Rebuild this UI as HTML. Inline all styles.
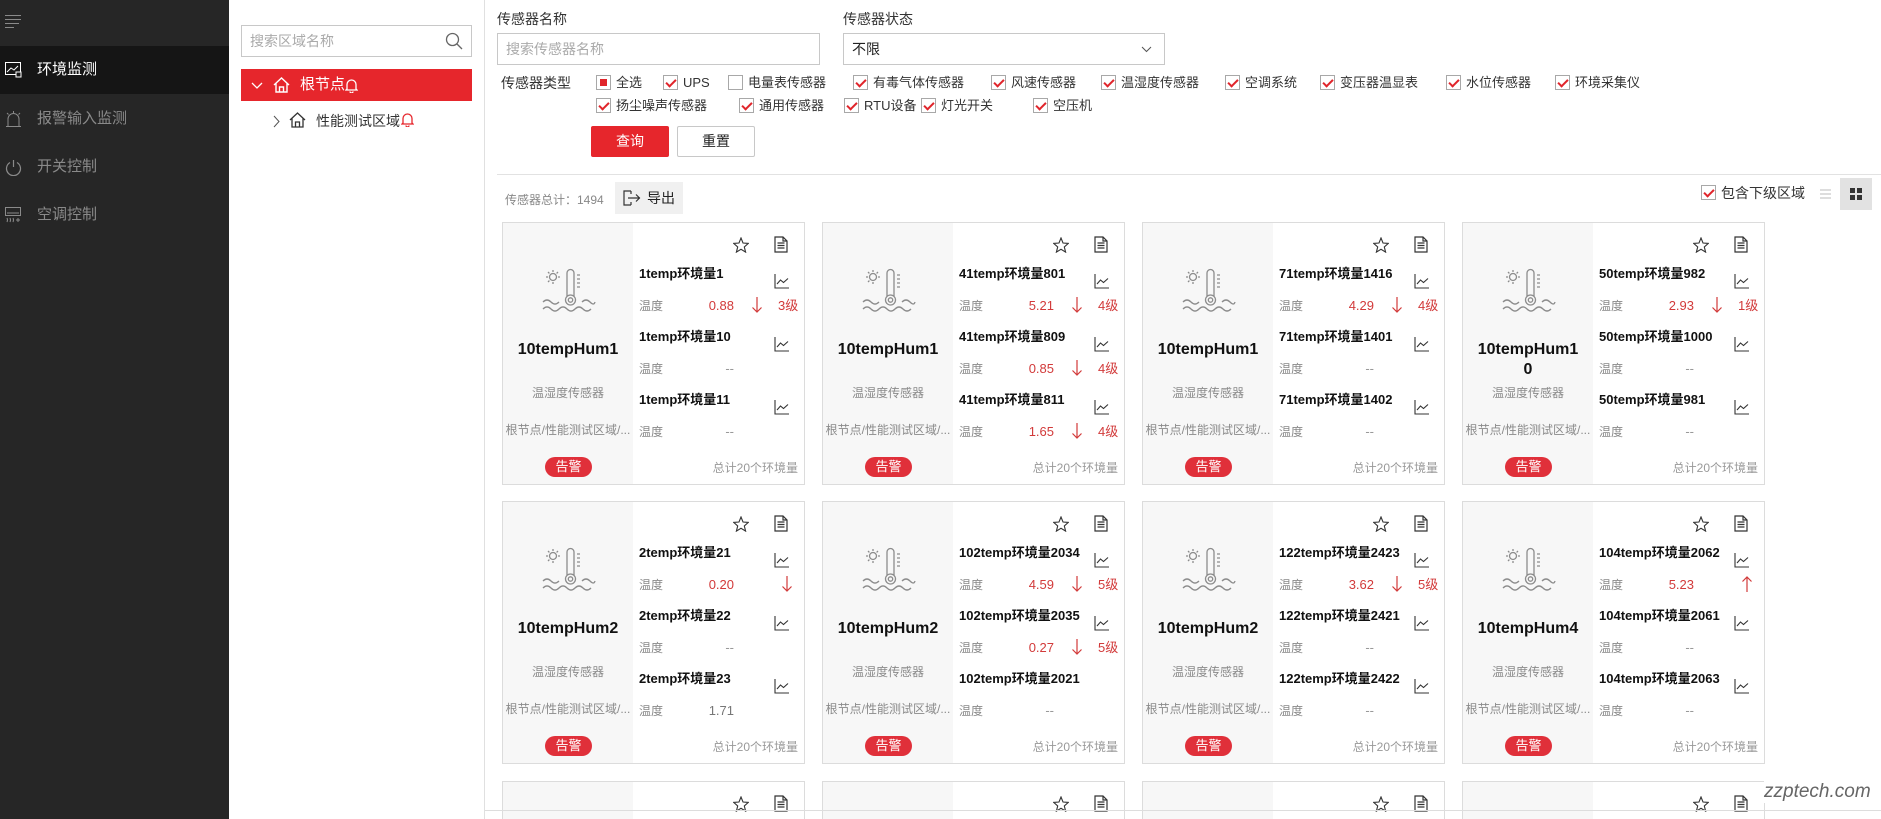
<!DOCTYPE html>
<html style="width:1881px;height:819px;overflow:hidden"><head><meta charset="utf-8">
<style>
*{margin:0;padding:0;box-sizing:border-box}
body{width:1881px;height:819px;overflow:hidden;background:#fff;font-family:"Liberation Sans","Noto Sans CJK SC",sans-serif;position:relative;color:#222}
.a{position:absolute;white-space:nowrap}
#side{position:absolute;left:0;top:0;width:229px;height:819px;background:#262626}
.si{position:absolute;left:0;width:229px;height:48px;color:#8a8a8a;font-size:15px;line-height:48px;padding-left:37px}
.si svg{position:absolute;left:5px;top:16px}
#tree{position:absolute;left:229px;top:0;width:256px;height:819px;border-right:1px solid #e0e0e0}
.cb{position:absolute;font-size:13px;color:#333;line-height:16px;padding-left:20px;white-space:nowrap}
.cb i{position:absolute;left:0;top:0;width:15px;height:15px;border:1px solid #a8a8a8;background:#fff}
.cb i.k::after{content:"";position:absolute;left:4px;top:1px;width:4px;height:8px;border:solid #e0252b;border-width:0 2px 2px 0;transform:rotate(45deg)}
.card{position:absolute;width:303px;height:263px;border:1px solid #dcdcdc;background:#fff;overflow:hidden}
.lp{position:absolute;left:0;top:0;width:130px;height:100%;background:#f7f7f7;text-align:center}
.nm{position:absolute;left:0;width:130px;font-size:16px;font-weight:bold;color:#111;top:117px;line-height:19px}
.tp{position:absolute;left:0;width:130px;top:161px;font-size:12px;color:#8a8a8a}
.pt{position:absolute;left:-2px;width:134px;top:198px;font-size:12px;color:#8a8a8a;white-space:nowrap;overflow:hidden}
.bd{position:absolute;left:42px;top:234px;width:47px;height:20px;border-radius:10px;background:#e0303a;color:#fff;font-size:13px;line-height:20px}
.ic{position:absolute;left:39px;top:44px}
.ti{position:absolute;left:136px;font-size:13px;font-weight:bold;color:#111}
.lb{position:absolute;left:136px;font-size:12px;color:#888;line-height:16px}
.v{position:absolute;right:70px;font-size:13px;color:#d23a3a;text-align:right;line-height:16px}
.v.g{color:#999}
.ar{position:absolute;left:249px}
.lv{position:absolute;left:275px;font-size:13px;color:#d23a3a;line-height:16px}
.ft{position:absolute;right:6px;top:236px;font-size:12px;color:#999}
.st{position:absolute;left:230px;top:14px}
.dc{position:absolute;left:271px;top:13px}
.ch{position:absolute;left:271px}
</style></head><body>

<div id="side">
 <svg class="a" style="left:5px;top:14px" width="17" height="14"><g stroke="#8a8a8a" stroke-width="1"><line x1="0" y1="1.5" x2="16" y2="1.5"/><line x1="0" y1="5.5" x2="16" y2="5.5"/><line x1="0" y1="9.5" x2="14" y2="9.5"/><line x1="0" y1="13.5" x2="9" y2="13.5"/></g></svg>
 <div class="si" style="top:46px;background:#151515;color:#fff"><svg width="17" height="16"><rect x="0.5" y="0.5" width="15" height="12" fill="none" stroke="#fff"/><polyline points="2,10 6,6 9,8 13,4" fill="none" stroke="#fff"/><rect x="11" y="10" width="5" height="5" fill="#151515" stroke="#fff"/></svg>环境监测</div>
 <div class="si" style="top:95px"><svg width="17" height="17"><path d="M3 15V8a5.5 5.5 0 0 1 11 0v7M1 15.5h15M8.5 0v2M2 2l1.5 1.5M15 2l-1.5 1.5" fill="none" stroke="#8a8a8a"/></svg>报警输入监测</div>
 <div class="si" style="top:143px"><svg width="17" height="17"><path d="M5 3.5a7 7 0 1 0 7 0M8.5 1v7" fill="none" stroke="#8a8a8a" stroke-width="1.2"/></svg>开关控制</div>
 <div class="si" style="top:191px"><svg width="17" height="17"><rect x="0.5" y="0.5" width="15" height="8" fill="none" stroke="#8a8a8a"/><line x1="2" y1="6" x2="14" y2="6" stroke="#8a8a8a"/><path d="M2 11q1 2 0 4M5 11q1 2 0 4M8 11q1 2 0 4M13 11v4M11 13h4" fill="none" stroke="#8a8a8a"/></svg>空调控制</div>
</div>

<div id="tree">
 <div class="a" style="left:12px;top:25px;width:231px;height:32px;border:1px solid #c8c8c8;font-size:14px;color:#aaa;line-height:30px;padding-left:8px">搜索区域名称
  <svg class="a" style="right:8px;top:6px" width="18" height="18"><circle cx="7.5" cy="7.5" r="6" fill="none" stroke="#666" stroke-width="1.3"/><line x1="12" y1="12" x2="17" y2="17" stroke="#666" stroke-width="1.3"/></svg></div>
 <div class="a" style="left:12px;top:69px;width:231px;height:32px;background:#e6262c;color:#fff;font-size:15px;line-height:32px">
  <svg class="a" style="left:10px;top:13px" width="12" height="8"><polyline points="1,1 6,6 11,1" fill="none" stroke="#fff" stroke-width="1.3"/></svg>
  <svg class="a" style="left:32px;top:8px" width="17" height="16"><path d="M1 8L8.5 1 16 8M3 6.5V15h11V6.5M6.5 15V10h4v5" fill="none" stroke="#fff" stroke-width="1.4"/></svg>
  <span class="a" style="left:59px">根节点</span>
  <svg class="a" style="left:104px;top:9px" width="13" height="15"><path d="M2 11V6.5a4.5 4.5 0 0 1 9 0V11l1 1H1zM5 13.5a1.5 1.5 0 0 0 3 0" fill="none" stroke="#fff" stroke-width="1.3"/></svg>
 </div>
 <svg class="a" style="left:44px;top:115px" width="8" height="13"><polyline points="1,1 6,6.5 1,12" fill="none" stroke="#555"/></svg>
 <svg class="a" style="left:60px;top:112px" width="17" height="16"><path d="M1 8L8.5 1 16 8M3 6.5V15h11V6.5M6.5 15V10h4v5" fill="none" stroke="#333" stroke-width="1.3"/></svg>
 <span class="a" style="left:87px;top:111px;font-size:14px;color:#333">性能测试区域</span>
 <svg class="a" style="left:172px;top:112px" width="13" height="15"><path d="M2 11V6.5a4.5 4.5 0 0 1 9 0V11l1 1H1zM5 13.5a1.5 1.5 0 0 0 3 0" fill="none" stroke="#e6262c" stroke-width="1.3"/></svg>
</div>

<span class="a" style="left:497px;top:9px;font-size:14px;color:#333">传感器名称</span>
<div class="a" style="left:497px;top:33px;width:323px;height:32px;border:1px solid #c8c8c8;font-size:14px;color:#aaa;line-height:30px;padding-left:8px">搜索传感器名称</div>
<span class="a" style="left:843px;top:9px;font-size:14px;color:#333">传感器状态</span>
<div class="a" style="left:843px;top:33px;width:322px;height:32px;border:1px solid #c8c8c8;font-size:14px;color:#222;line-height:30px;padding-left:8px">不限
 <svg class="a" style="right:12px;top:12px" width="11" height="7"><polyline points="1,1 5.5,5.5 10,1" fill="none" stroke="#555"/></svg></div>
<span class="a" style="left:501px;top:73px;font-size:14px;color:#333">传感器类型</span>

<div class="cb" style="left:596px;top:75px"><i><b style="position:absolute;left:3px;top:3px;width:7px;height:7px;background:#e0252b"></b></i>全选</div>
<div class="cb" style="left:663px;top:75px"><i class="k"></i>UPS</div>
<div class="cb" style="left:728px;top:75px"><i></i>电量表传感器</div>
<div class="cb" style="left:853px;top:75px"><i class="k"></i>有毒气体传感器</div>
<div class="cb" style="left:991px;top:75px"><i class="k"></i>风速传感器</div>
<div class="cb" style="left:1101px;top:75px"><i class="k"></i>温湿度传感器</div>
<div class="cb" style="left:1225px;top:75px"><i class="k"></i>空调系统</div>
<div class="cb" style="left:1320px;top:75px"><i class="k"></i>变压器温显表</div>
<div class="cb" style="left:1446px;top:75px"><i class="k"></i>水位传感器</div>
<div class="cb" style="left:1555px;top:75px"><i class="k"></i>环境采集仪</div>
<div class="cb" style="left:596px;top:98px"><i class="k"></i>扬尘噪声传感器</div>
<div class="cb" style="left:739px;top:98px"><i class="k"></i>通用传感器</div>
<div class="cb" style="left:844px;top:98px"><i class="k"></i>RTU设备</div>
<div class="cb" style="left:921px;top:98px"><i class="k"></i>灯光开关</div>
<div class="cb" style="left:1033px;top:98px"><i class="k"></i>空压机</div>

<div class="a" style="left:591px;top:126px;width:78px;height:31px;background:#e6262c;color:#fff;font-size:14px;line-height:31px;text-align:center;border-radius:2px">查询</div>
<div class="a" style="left:677px;top:126px;width:78px;height:31px;border:1px solid #c8c8c8;color:#222;font-size:14px;line-height:29px;text-align:center;border-radius:2px">重置</div>
<div class="a" style="left:497px;top:174px;width:1384px;height:1px;background:#e2e2e2"></div>

<span class="a" style="left:505px;top:191px;font-size:12px;color:#888">传感器总计：1494</span>
<div class="a" style="left:615px;top:182px;width:68px;height:32px;background:#f0f0f0;font-size:14px;line-height:32px;padding-left:32px;color:#222">导出
 <svg class="a" style="left:8px;top:8px" width="18" height="16"><path d="M8 1H1v14h7M8 1v3M8 15v-3M5 8h12M13 4.5 16.5 8 13 11.5" fill="none" stroke="#333" stroke-width="1.2"/></svg></div>

<div class="cb" style="left:1701px;top:185px;font-size:14px"><i class="k"></i>包含下级区域</div>
<svg class="a" style="left:1820px;top:189px" width="11" height="10"><g stroke="#bbb"><line x1="0" y1="1" x2="11" y2="1"/><line x1="0" y1="5" x2="11" y2="5"/><line x1="0" y1="9" x2="11" y2="9"/></g></svg>
<div class="a" style="left:1840px;top:178px;width:32px;height:32px;background:#e2e2e2"><svg class="a" style="left:10px;top:10px" width="12" height="12" fill="#333"><rect x="0" y="0" width="5" height="5"/><rect x="7" y="0" width="5" height="5"/><rect x="0" y="7" width="5" height="5"/><rect x="7" y="7" width="5" height="5"/></svg></div>

<svg width="0" height="0" style="position:absolute">
 <defs>
  <g id="sen" fill="none" stroke="#8c8c8c" stroke-width="1.3">
   <circle cx="11" cy="10" r="3.5"/><path d="M11 3v2M11 15v2M4 10h2M16 10h2M6 5l1.4 1.4M16 5l-1.4 1.4M6 15l1.4-1.4"/>
   <path d="M25 29V6a3.5 3.5 0 0 1 7 0v23"/><circle cx="28.5" cy="33" r="5"/><circle cx="28.5" cy="33" r="2.2"/>
   <path d="M35 8h3M35 12h3M35 16h3M35 20h3"/>
   <path d="M1 35q4-4 8 0t8 0M40 35q4-4 8 0t5 0"/><path d="M1 42q4-4 8 0t8 0t8 0t8 0t8 0t8 0"/>
  </g>
  <g id="star"><path d="M8 1l2 5 5.3.4-4 3.5 1.3 5.2L8 12.3 3.4 15.1l1.3-5.2-4-3.5L6 6z" fill="none" stroke="#333" stroke-width="1.1"/></g>
  <g id="doc"><path d="M1 1h8l4 4v11H1zM9 1v4h4M3.5 7h7M3.5 9.5h7M3.5 12h7" fill="none" stroke="#333" stroke-width="1.2"/></g>
  <g id="chr"><path d="M1 0v14h14M3 10l3.5-4 3 2.5 4.5-4" fill="none" stroke="#333" stroke-width="1.1"/></g>
  <g id="dn"><path d="M5 0v15M0.5 10.5 5 15 9.5 10.5" fill="none" stroke="#d23a3a" stroke-width="1.2"/></g>
  <g id="up"><path d="M5 16V1M0.5 5.5 5 1 9.5 5.5" fill="none" stroke="#d23a3a" stroke-width="1.2"/></g>
 </defs>
</svg>

<!-- Row 1 -->
<div class="card" style="left:502px;top:222px">
 <div class="lp"><svg class="ic" width="56" height="46"><use href="#sen"/></svg><div class="nm">10tempHum1</div><div class="tp">温湿度传感器</div><div class="pt">根节点/性能测试区域/...</div><div class="bd">告警</div></div>
 <svg class="st" width="16" height="16"><use href="#star"/></svg><svg class="dc" width="14" height="17"><use href="#doc"/></svg>
 <div class="ti" style="top:40px">1temp环境量1</div><svg class="ch" style="top:51px" width="16" height="15"><use href="#chr"/></svg>
 <div class="lb" style="top:75px">温度</div><div class="v" style="top:75px">0.88</div><svg class="ar" style="top:74px" width="10" height="16"><use href="#dn"/></svg><div class="lv" style="top:75px">3级</div>
 <div class="ti" style="top:103px">1temp环境量10</div><svg class="ch" style="top:114px" width="16" height="15"><use href="#chr"/></svg>
 <div class="lb" style="top:138px">温度</div><div class="v g" style="top:138px">--</div>
 <div class="ti" style="top:166px">1temp环境量11</div><svg class="ch" style="top:177px" width="16" height="15"><use href="#chr"/></svg>
 <div class="lb" style="top:201px">温度</div><div class="v g" style="top:201px">--</div>
 <div class="ft">总计20个环境量</div>
</div>
<div class="card" style="left:822px;top:222px">
 <div class="lp"><svg class="ic" width="56" height="46"><use href="#sen"/></svg><div class="nm">10tempHum1</div><div class="tp">温湿度传感器</div><div class="pt">根节点/性能测试区域/...</div><div class="bd">告警</div></div>
 <svg class="st" width="16" height="16"><use href="#star"/></svg><svg class="dc" width="14" height="17"><use href="#doc"/></svg>
 <div class="ti" style="top:40px">41temp环境量801</div><svg class="ch" style="top:51px" width="16" height="15"><use href="#chr"/></svg>
 <div class="lb" style="top:75px">温度</div><div class="v" style="top:75px">5.21</div><svg class="ar" style="top:74px" width="10" height="16"><use href="#dn"/></svg><div class="lv" style="top:75px">4级</div>
 <div class="ti" style="top:103px">41temp环境量809</div><svg class="ch" style="top:114px" width="16" height="15"><use href="#chr"/></svg>
 <div class="lb" style="top:138px">温度</div><div class="v" style="top:138px">0.85</div><svg class="ar" style="top:137px" width="10" height="16"><use href="#dn"/></svg><div class="lv" style="top:138px">4级</div>
 <div class="ti" style="top:166px">41temp环境量811</div><svg class="ch" style="top:177px" width="16" height="15"><use href="#chr"/></svg>
 <div class="lb" style="top:201px">温度</div><div class="v" style="top:201px">1.65</div><svg class="ar" style="top:200px" width="10" height="16"><use href="#dn"/></svg><div class="lv" style="top:201px">4级</div>
 <div class="ft">总计20个环境量</div>
</div>
<div class="card" style="left:1142px;top:222px">
 <div class="lp"><svg class="ic" width="56" height="46"><use href="#sen"/></svg><div class="nm">10tempHum1</div><div class="tp">温湿度传感器</div><div class="pt">根节点/性能测试区域/...</div><div class="bd">告警</div></div>
 <svg class="st" width="16" height="16"><use href="#star"/></svg><svg class="dc" width="14" height="17"><use href="#doc"/></svg>
 <div class="ti" style="top:40px">71temp环境量1416</div><svg class="ch" style="top:51px" width="16" height="15"><use href="#chr"/></svg>
 <div class="lb" style="top:75px">温度</div><div class="v" style="top:75px">4.29</div><svg class="ar" style="top:74px" width="10" height="16"><use href="#dn"/></svg><div class="lv" style="top:75px">4级</div>
 <div class="ti" style="top:103px">71temp环境量1401</div><svg class="ch" style="top:114px" width="16" height="15"><use href="#chr"/></svg>
 <div class="lb" style="top:138px">温度</div><div class="v g" style="top:138px">--</div>
 <div class="ti" style="top:166px">71temp环境量1402</div><svg class="ch" style="top:177px" width="16" height="15"><use href="#chr"/></svg>
 <div class="lb" style="top:201px">温度</div><div class="v g" style="top:201px">--</div>
 <div class="ft">总计20个环境量</div>
</div>
<div class="card" style="left:1462px;top:222px">
 <div class="lp"><svg class="ic" width="56" height="46"><use href="#sen"/></svg><div class="nm" style="top:117px;line-height:20px">10tempHum1<br>0</div><div class="tp">温湿度传感器</div><div class="pt">根节点/性能测试区域/...</div><div class="bd">告警</div></div>
 <svg class="st" width="16" height="16"><use href="#star"/></svg><svg class="dc" width="14" height="17"><use href="#doc"/></svg>
 <div class="ti" style="top:40px">50temp环境量982</div><svg class="ch" style="top:51px" width="16" height="15"><use href="#chr"/></svg>
 <div class="lb" style="top:75px">温度</div><div class="v" style="top:75px">2.93</div><svg class="ar" style="top:74px" width="10" height="16"><use href="#dn"/></svg><div class="lv" style="top:75px">1级</div>
 <div class="ti" style="top:103px">50temp环境量1000</div><svg class="ch" style="top:114px" width="16" height="15"><use href="#chr"/></svg>
 <div class="lb" style="top:138px">温度</div><div class="v g" style="top:138px">--</div>
 <div class="ti" style="top:166px">50temp环境量981</div><svg class="ch" style="top:177px" width="16" height="15"><use href="#chr"/></svg>
 <div class="lb" style="top:201px">温度</div><div class="v g" style="top:201px">--</div>
 <div class="ft">总计20个环境量</div>
</div>

<!-- Row 2 -->
<div class="card" style="left:502px;top:501px">
 <div class="lp"><svg class="ic" width="56" height="46"><use href="#sen"/></svg><div class="nm">10tempHum2</div><div class="tp">温湿度传感器</div><div class="pt">根节点/性能测试区域/...</div><div class="bd">告警</div></div>
 <svg class="st" width="16" height="16"><use href="#star"/></svg><svg class="dc" width="14" height="17"><use href="#doc"/></svg>
 <div class="ti" style="top:40px">2temp环境量21</div><svg class="ch" style="top:51px" width="16" height="15"><use href="#chr"/></svg>
 <div class="lb" style="top:75px">温度</div><div class="v" style="top:75px">0.20</div><svg class="ar" style="top:74px;left:279px" width="10" height="16"><use href="#dn"/></svg>
 <div class="ti" style="top:103px">2temp环境量22</div><svg class="ch" style="top:114px" width="16" height="15"><use href="#chr"/></svg>
 <div class="lb" style="top:138px">温度</div><div class="v g" style="top:138px">--</div>
 <div class="ti" style="top:166px">2temp环境量23</div><svg class="ch" style="top:177px" width="16" height="15"><use href="#chr"/></svg>
 <div class="lb" style="top:201px">温度</div><div class="v g" style="top:201px;color:#777">1.71</div>
 <div class="ft">总计20个环境量</div>
</div>
<div class="card" style="left:822px;top:501px">
 <div class="lp"><svg class="ic" width="56" height="46"><use href="#sen"/></svg><div class="nm">10tempHum2</div><div class="tp">温湿度传感器</div><div class="pt">根节点/性能测试区域/...</div><div class="bd">告警</div></div>
 <svg class="st" width="16" height="16"><use href="#star"/></svg><svg class="dc" width="14" height="17"><use href="#doc"/></svg>
 <div class="ti" style="top:40px">102temp环境量2034</div><svg class="ch" style="top:51px" width="16" height="15"><use href="#chr"/></svg>
 <div class="lb" style="top:75px">温度</div><div class="v" style="top:75px">4.59</div><svg class="ar" style="top:74px" width="10" height="16"><use href="#dn"/></svg><div class="lv" style="top:75px">5级</div>
 <div class="ti" style="top:103px">102temp环境量2035</div><svg class="ch" style="top:114px" width="16" height="15"><use href="#chr"/></svg>
 <div class="lb" style="top:138px">温度</div><div class="v" style="top:138px">0.27</div><svg class="ar" style="top:137px" width="10" height="16"><use href="#dn"/></svg><div class="lv" style="top:138px">5级</div>
 <div class="ti" style="top:166px">102temp环境量2021</div>
 <div class="lb" style="top:201px">温度</div><div class="v g" style="top:201px">--</div>
 <div class="ft">总计20个环境量</div>
</div>
<div class="card" style="left:1142px;top:501px">
 <div class="lp"><svg class="ic" width="56" height="46"><use href="#sen"/></svg><div class="nm">10tempHum2</div><div class="tp">温湿度传感器</div><div class="pt">根节点/性能测试区域/...</div><div class="bd">告警</div></div>
 <svg class="st" width="16" height="16"><use href="#star"/></svg><svg class="dc" width="14" height="17"><use href="#doc"/></svg>
 <div class="ti" style="top:40px">122temp环境量2423</div><svg class="ch" style="top:51px" width="16" height="15"><use href="#chr"/></svg>
 <div class="lb" style="top:75px">温度</div><div class="v" style="top:75px">3.62</div><svg class="ar" style="top:74px" width="10" height="16"><use href="#dn"/></svg><div class="lv" style="top:75px">5级</div>
 <div class="ti" style="top:103px">122temp环境量2421</div><svg class="ch" style="top:114px" width="16" height="15"><use href="#chr"/></svg>
 <div class="lb" style="top:138px">温度</div><div class="v g" style="top:138px">--</div>
 <div class="ti" style="top:166px">122temp环境量2422</div><svg class="ch" style="top:177px" width="16" height="15"><use href="#chr"/></svg>
 <div class="lb" style="top:201px">温度</div><div class="v g" style="top:201px">--</div>
 <div class="ft">总计20个环境量</div>
</div>
<div class="card" style="left:1462px;top:501px">
 <div class="lp"><svg class="ic" width="56" height="46"><use href="#sen"/></svg><div class="nm">10tempHum4</div><div class="tp">温湿度传感器</div><div class="pt">根节点/性能测试区域/...</div><div class="bd">告警</div></div>
 <svg class="st" width="16" height="16"><use href="#star"/></svg><svg class="dc" width="14" height="17"><use href="#doc"/></svg>
 <div class="ti" style="top:40px">104temp环境量2062</div><svg class="ch" style="top:51px" width="16" height="15"><use href="#chr"/></svg>
 <div class="lb" style="top:75px">温度</div><div class="v" style="top:75px">5.23</div><svg class="ar" style="top:74px;left:279px" width="10" height="16"><use href="#up"/></svg>
 <div class="ti" style="top:103px">104temp环境量2061</div><svg class="ch" style="top:114px" width="16" height="15"><use href="#chr"/></svg>
 <div class="lb" style="top:138px">温度</div><div class="v g" style="top:138px">--</div>
 <div class="ti" style="top:166px">104temp环境量2063</div><svg class="ch" style="top:177px" width="16" height="15"><use href="#chr"/></svg>
 <div class="lb" style="top:201px">温度</div><div class="v g" style="top:201px">--</div>
 <div class="ft">总计20个环境量</div>
</div>

<!-- Row 3 partial -->
<div class="card" style="left:502px;top:781px;height:38px;border-bottom:0"><div class="lp"></div><svg class="st" width="16" height="16"><use href="#star"/></svg><svg class="dc" width="14" height="17"><use href="#doc"/></svg></div>
<div class="card" style="left:822px;top:781px;height:38px;border-bottom:0"><div class="lp"></div><svg class="st" width="16" height="16"><use href="#star"/></svg><svg class="dc" width="14" height="17"><use href="#doc"/></svg></div>
<div class="card" style="left:1142px;top:781px;height:38px;border-bottom:0"><div class="lp"></div><svg class="st" width="16" height="16"><use href="#star"/></svg><svg class="dc" width="14" height="17"><use href="#doc"/></svg></div>
<div class="card" style="left:1462px;top:781px;height:38px;border-bottom:0"><div class="lp"></div><svg class="st" width="16" height="16"><use href="#star"/></svg><svg class="dc" width="14" height="17"><use href="#doc"/></svg></div>

<div class="a" style="left:485px;top:810px;width:1396px;height:1px;background:#ddd"></div>
<span class="a" style="left:1764px;top:781px;font-size:19px;font-style:italic;color:#666;background:#fff">zzptech.com</span>
</body></html>
